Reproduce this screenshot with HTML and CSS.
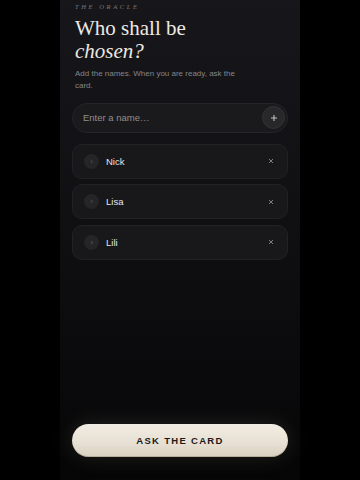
FILE: index.html
```html
<!DOCTYPE html>
<html lang="en">
<head>
<meta charset="utf-8">
<title>The Oracle</title>
<link rel="stylesheet" href="styles.css">
</head>
<body>
<main class="app">
  <header class="head">
    <p class="eyebrow">THE ORACLE</p>
    <h1 class="title"><span class="line">Who shall be</span><em class="line">chosen?</em></h1>
    <p class="lede">Add the names. When you are ready, ask the card.</p>
  </header>

  <div class="entry">
    <span class="placeholder">Enter a name…</span>
    <button class="add" type="button" aria-label="Add">
      <svg viewBox="0 0 8 8" width="8" height="8"><path d="M4 1v6M1 4h6" stroke="#c0c0c0" stroke-width="1.1" fill="none"/></svg>
    </button>
  </div>

  <ul class="list">
    <li class="item"><span class="num">1</span><span class="name">Nick</span><span class="del"><svg viewBox="0 0 6 6" width="6" height="6"><path d="M1 1l4 4M5 1l-4 4" stroke="#8a8a8a" stroke-width="0.9" fill="none"/></svg></span></li>
    <li class="item"><span class="num">2</span><span class="name">Lisa</span><span class="del"><svg viewBox="0 0 6 6" width="6" height="6"><path d="M1 1l4 4M5 1l-4 4" stroke="#8a8a8a" stroke-width="0.9" fill="none"/></svg></span></li>
    <li class="item"><span class="num">3</span><span class="name">Lili</span><span class="del"><svg viewBox="0 0 6 6" width="6" height="6"><path d="M1 1l4 4M5 1l-4 4" stroke="#8a8a8a" stroke-width="0.9" fill="none"/></svg></span></li>
  </ul>

  <button class="ask" type="button">ASK THE CARD</button>
</main>
</body>
</html>
```

FILE: styles.css
```css
* { box-sizing: border-box; }
html, body { margin: 0; padding: 0; background: #000; }
body { font-family: "Liberation Sans", Arial, sans-serif; }

.app {
  width: 240px;
  height: 480px;
  margin: 0 auto;
  padding: 2px 12px 23px;
  display: flex;
  flex-direction: column;
  background: linear-gradient(180deg, #17171b 0%, #101013 45%, #060607 100%);
}

.head { display: flex; flex-direction: column; }

.eyebrow {
  margin: 0;
  padding-left: 3px;
  font-family: "Liberation Serif", "Times New Roman", serif;
  font-style: italic;
  font-size: 6.5px;
  line-height: 10px;
  letter-spacing: 2.6px;
  color: #7a7a7e;
}

.title {
  margin: 4.5px 0 0;
  padding-left: 3px;
  font-family: "Liberation Serif", "Times New Roman", serif;
  font-weight: 400;
  font-size: 21px;
  line-height: 23px;
  color: #ece9e3;
  display: flex;
  flex-direction: column;
}
.title .line { display: block; }
.title em { font-style: italic; }

.lede {
  margin: 5.5px 0 0;
  padding-left: 3px;
  max-width: 175px;
  font-size: 8px;
  line-height: 12px;
  color: #858589;
}

.entry {
  margin-top: 10.5px;
  height: 30px;
  border-radius: 15px;
  background: #1a1a1d;
  border: 1px solid #252528;
  display: flex;
  align-items: center;
  justify-content: space-between;
  padding: 0 2px 0 10px;
}
.placeholder { font-size: 9.5px; color: #8e8e92; }
.add {
  width: 23px;
  height: 23px;
  border-radius: 50%;
  border: 1px solid #333336;
  background: #28282b;
  padding: 0;
  display: flex;
  align-items: center;
  justify-content: center;
}

.list {
  list-style: none;
  margin: 11px 0 0;
  padding: 0;
  display: flex;
  flex-direction: column;
  gap: 5.5px;
}
.item {
  height: 35px;
  border-radius: 10px;
  background: #18181b;
  border: 1px solid #222225;
  display: flex;
  align-items: center;
  padding: 0 13px 0 11px;
}
.num {
  width: 15px;
  height: 15px;
  border-radius: 50%;
  background: #252528;
  color: #6a6a6d;
  font-size: 4px;
  display: flex;
  align-items: center;
  justify-content: center;
}
.name {
  margin-left: 7px;
  flex: 1;
  font-size: 9.5px;
  color: #e4e4e6;
}
.del { display: flex; width: 6px; height: 6px; }

.ask {
  margin-top: auto;
  height: 33px;
  border: none;
  border-radius: 17px;
  background: linear-gradient(180deg, #f2ede4 0%, #e6dfd2 60%, #d8d0c0 100%);
  box-shadow: 0 0 22px rgba(235, 225, 205, 0.14), 0 6px 14px rgba(0, 0, 0, 0.6), inset 0 -1px 0 rgba(120, 105, 80, 0.35);
  font-family: "Liberation Sans", Arial, sans-serif;
  font-weight: 700;
  font-size: 9.5px;
  letter-spacing: 1.3px;
  color: #1b1a18;
  padding: 0;
}
```
